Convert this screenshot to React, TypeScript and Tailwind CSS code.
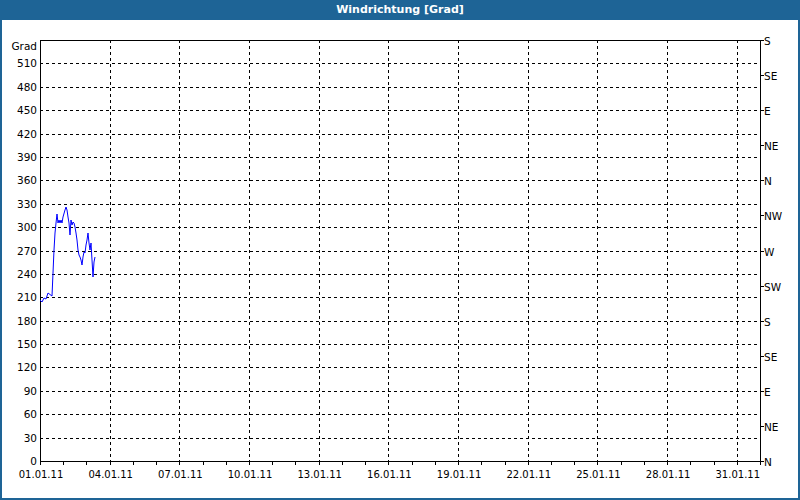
import React from "react";

const L = 40, R = 760, T = 40, B = 461;
const yv = (v: number) => B - (v / 540) * (B - T);
const xd = (d: number) => L + (d / 31) * (R - L);

const pts: [number, number][] = [[40,300],[42,302],[44,298],[46,299],[48,293],[52,296],[53,273],[54,250],[55,233],[56,223],[57,214],[58,223],[59,220],[60,223],[61,220],[62,223],[63,217],[65,210],[66,207],[67,210],[68,217],[69,223],[70,235],[71,220],[72,225],[73,222],[74,223],[75,227],[76,233],[77,240],[78,250],[79,255],[80,257],[81,260],[82,265],[83,257],[84,252],[85,253],[86,245],[87,240],[88,233],[89,243],[90,250],[91,243],[92,260],[93,277],[94,262],[95,257]];

const dirs = ["N","NE","E","SE","S","SW","W","NW","N","NE","E","SE","S"];

export default function App() {
  const yTicks = Array.from({ length: 18 }, (_, i) => i * 30);
  const xLabels = Array.from({ length: 11 }, (_, i) => i * 3);
  return (
    <div className="w-[800px] h-[500px] bg-[#1e6496] flex flex-col" style={{ fontFamily: "'DejaVu Sans', Tahoma, sans-serif" }}>
      <div className="h-[20px] flex items-center justify-center text-white text-[11px] font-bold">Windrichtung [Grad]</div>
      <div className="flex-1 mx-[2px] mb-[2px] bg-white relative">
        <svg width="796" height="478" className="block" style={{ fontFamily: "'DejaVu Sans', Tahoma, sans-serif" }}>
          <g transform="translate(-2,-20)" fontSize="10.5" fill="#000">
            <g shapeRendering="crispEdges">
              {yTicks.slice(1).map(v => (
                <line key={"h" + v} x1={L} x2={R} y1={Math.round(yv(v)) + 0.5} y2={Math.round(yv(v)) + 0.5} stroke="#000" strokeDasharray="3,3" />
              ))}
              {xLabels.slice(1).map(d => (
                <line key={"v" + d} y1={T} y2={B} x1={Math.round(xd(d)) + 0.5} x2={Math.round(xd(d)) + 0.5} stroke="#000" strokeDasharray="3,3" />
              ))}
              <rect x={L + 0.5} y={T + 0.5} width={R - L} height={B - T} fill="none" stroke="#000" />
              {Array.from({ length: 32 }, (_, d) => (
                <line key={"t" + d} x1={Math.round(xd(d)) + 0.5} x2={Math.round(xd(d)) + 0.5} y1={B} y2={B + 4} stroke="#000" />
              ))}
            </g>
            {yTicks.map(v => (
              <text key={"yl" + v} x={37} y={Math.round(yv(v)) + 4} textAnchor="end">{v}</text>
            ))}
            <text x={37} y={50} textAnchor="end">Grad</text>
            {dirs.map((s, i) => {
              const y = Math.round(yv(i * 45)) + 0.5;
              return (
                <g key={"d" + i}>
                  <line x1={R} x2={R + 4} y1={y} y2={y} stroke="#000" shapeRendering="crispEdges" />
                  <text x={R + 4} y={y + 4}>{s}</text>
                </g>
              );
            })}
            {xLabels.map(d => (
              <text key={"xl" + d} x={xd(d) + 1} y={B + 17} textAnchor="middle" fontSize="10">{String(1 + d).padStart(2, "0")}.01.11</text>
            ))}
            <polyline points={pts.map(p => p.join(",")).join(" ")} fill="none" stroke="#0000ff" strokeWidth="1" />
          </g>
        </svg>
      </div>
    </div>
  );
}
